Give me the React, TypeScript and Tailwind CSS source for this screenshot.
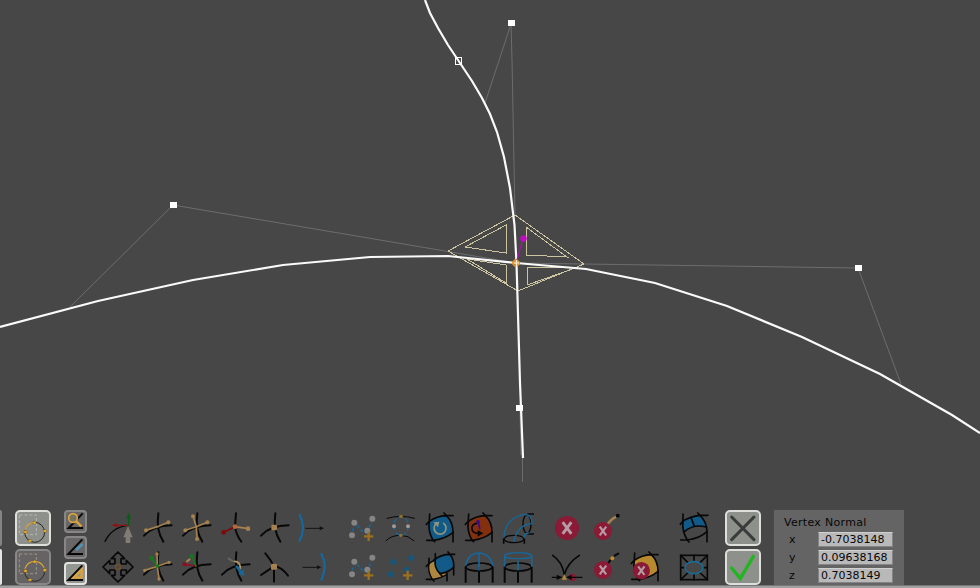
import React from "react";

const TAN = "#a4814e";
const BLUE = "#17679a";
const RED = "#8a1a36";
const GREEN = "#137a1c";

type Pt = [number, number];

function Cell({ children }: { children?: React.ReactNode }) {
  return (
    <svg className="block h-[39px] w-[39px] shrink-0" viewBox="0 0 117 117" fill="none" stroke="#080808" strokeWidth={6} strokeLinecap="round">
      {children}
    </svg>
  );
}

function Cross() {
  return (
    <>
      <path d="M64 16Q57 68 79 101" />
      <path d="M21 83Q47 53 104 52" />
    </>
  );
}

function Handle({ from, to, color = TAN, r = 6 }: { from: Pt; to: Pt; color?: string; r?: number }) {
  return (
    <>
      <path d={`M${from[0]} ${from[1]}L${to[0]} ${to[1]}`} stroke={color} strokeWidth={5} />
      <circle cx={to[0]} cy={to[1]} r={r} fill={color} stroke="none" />
    </>
  );
}

function Plus() {
  return <path d="M80 71V99M66 85H94" stroke="#9b701e" strokeWidth={7} strokeLinecap="butt" />;
}

function Nodes() {
  const points: Pt[] = [[30, 82], [37, 44], [76, 68], [91, 32]];
  return (
    <Cell>
      <path d="M31 70L35 55M46 53L65 74M82 58L88 43" stroke={BLUE} strokeWidth={5} strokeDasharray="9 6" strokeLinecap="butt" />
      {points.map(([x, y]) => (
        <circle key={x} cx={x} cy={y} r={9} fill="#858585" stroke="none" />
      ))}
      <Plus />
    </Cell>
  );
}

function Patch({ fill }: { fill: string }) {
  return (
    <>
      <path d="M28 40Q50 24 79 23Q99 42 99 73Q76 93 39 97Q23 68 28 40Z" fill={fill} strokeWidth={5} strokeLinejoin="round" />
      <path d="M19 49L28 40M28 40L29 18M79 23H99M79 23L72 15M99 73V101M39 97H20M39 97L44 101" strokeWidth={5} />
    </>
  );
}

function Cancel({ x, y, r }: { x: number; y: number; r: number }) {
  const s = r * 0.29;
  return (
    <>
      <circle cx={x} cy={y} r={r} fill={RED} stroke="none" />
      <path
        d={`M${x - s} ${y - s * 1.35}L${x + s} ${y + s * 1.35}M${x + s} ${y - s * 1.35}L${x - s} ${y + s * 1.35}`}
        stroke="#b79ca4"
        strokeWidth={r * 0.24}
        strokeLinecap="square"
      />
    </>
  );
}

function Row({ groups }: { groups: React.ReactNode[][] }) {
  return (
    <div className="flex gap-[10px]">
      {groups.map((g, i) => (
        <div key={i} className="flex">
          {g.map((n, j) => (
            <React.Fragment key={j}>{n}</React.Fragment>
          ))}
        </div>
      ))}
    </div>
  );
}

const topRow: React.ReactNode[][] = [
  [
    <Cell>
      <path d="M21 100Q42 57 91 52" strokeWidth={4} />
      <path d="M91 52H48" stroke="#8d1212" strokeWidth={4} />
      <path d="M40 52L58 46V58Z" fill="#8d1212" stroke="none" />
      <path d="M92 51V25" stroke="#0b5c14" strokeWidth={4} />
      <path d="M92 14L99 33H85Z" fill="#0b5c14" stroke="none" />
      <path d="M90 54L104 88H97V105H83V88H76Z" fill="#807c74" stroke="none" />
    </Cell>,
    <Cell>
      <Cross />
      <Handle from={[61, 56]} to={[27, 67]} />
      <Handle from={[61, 56]} to={[94, 43]} />
    </Cell>,
    <Cell>
      <Cross />
      <Handle from={[61, 56]} to={[28, 67]} />
      <Handle from={[61, 56]} to={[94, 43]} />
      <Handle from={[61, 56]} to={[51, 25]} />
      <Handle from={[61, 56]} to={[63, 93]} />
    </Cell>,
    <Cell>
      <path d="M63 16L60 56Q64 82 79 101" />
      <Handle from={[60, 56]} to={[26, 73]} color="#7e0808" r={7} />
      <Handle from={[60, 56]} to={[99, 62]} r={7} />
      <circle cx={60} cy={56} r={7} fill="#b4693c" stroke="none" />
    </Cell>,
    <Cell>
      <Cross />
      <rect x={52} y={50} width={17} height={17} rx={4} fill={TAN} stroke="none" />
    </Cell>,
    <Cell>
      <path d="M20 21Q40 59 20 98" stroke={BLUE} strokeWidth={7} />
      <path d="M38 61H88" strokeWidth={2.5} />
      <path d="M93 61L80 55V67Z" fill="#111" stroke="none" />
    </Cell>,
  ],
  [
    <Nodes />,
    <Cell>
      <path d="M18 31Q59 19 101 31M15 98Q30 82 59 82Q82 82 99 98" strokeWidth={3} />
      <ellipse cx={60} cy={54} rx={22} ry={28} stroke={BLUE} strokeWidth={4} strokeDasharray="14 8" strokeLinecap="butt" />
      <circle cx={60} cy={25} r={5} fill="#9b701e" stroke="none" />
      <circle cx={59} cy={82} r={5} fill="#9b701e" stroke="none" />
      <circle cx={39} cy={55} r={6} fill="#9b9b9b" stroke="none" />
      <circle cx={81} cy={55} r={6} fill="#9b9b9b" stroke="none" />
    </Cell>,
    <Cell>
      <Patch fill="#125a87" />
      <path d="M71 46A18 18 0 1 1 51 45" stroke="#8f967f" strokeWidth={5} />
      <path d="M40 43L58 41L54 58Z" fill="#8f967f" stroke="none" />
    </Cell>,
    <Cell>
      <Patch fill="#83300f" />
      <path d="M53 46C32 48 34 77 58 76" strokeWidth={5} />
      <path d="M73 76L56 66V86Z" fill="#080808" stroke="none" />
      <path d="M58 41L62 62" stroke="#350a90" strokeWidth={5} />
      <circle cx={57} cy={41} r={5} fill="#350a90" stroke="none" />
    </Cell>,
    <Cell>
      <ellipse cx={48} cy={93} rx={30} ry={11} strokeWidth={4} />
      <ellipse cx={87} cy={48} rx={12} ry={28} strokeWidth={4} />
      <path d="M17 92V107M79 92V107M88 18H108M88 78H108" strokeWidth={5} strokeLinecap="butt" />
      <path d="M18 87C20 45 47 23 82 19C96 20 102 30 102 47C75 49 55 66 48 100M78 88C78 81 84 76 91 75" stroke={BLUE} strokeWidth={4} />
    </Cell>,
  ],
  [
    <Cell>
      <Cancel x={60} y={60} r={36} />
    </Cell>,
    <Cell>
      <path d="M65 48Q76 32 92 25" stroke={TAN} strokeWidth={7} />
      <circle cx={95} cy={23} r={6} fill="#080808" stroke="none" />
      <Cancel x={51} y={69} r={27} />
    </Cell>,
    <Cell />,
  ],
  [
    <Cell>
      <path d="M27 39Q49 26 78 22Q94 38 96 57Q64 48 31 71Q25 54 27 39Z" fill="#125a87" stroke="none" />
      <path d="M27 39Q49 26 78 22Q99 42 99 71Q76 92 40 96Q23 68 27 39Z" strokeWidth={5} strokeLinejoin="round" />
      <path d="M31 71Q60 47 96 57M52 31L61 55M19 49L27 39V18M78 22H102M78 22L71 15M99 71V101M40 96H20M40 96L45 102" strokeWidth={5} />
    </Cell>,
  ],
];

const bottomRow: React.ReactNode[][] = [
  [
    <Cell>
      <path
        d="M60 15L80 35H69V49L72 51H85V40L105 60L85 80V69H72L69 71V85H80L60 105L40 85H51V71L48 69H35V80L15 60L35 40V51H48L51 49V35H40Z"
        strokeWidth={5}
        strokeLinejoin="round"
      />
      <circle cx={60} cy={60} r={7} stroke="#765024" strokeWidth={4} />
    </Cell>,
    <Cell>
      <Cross />
      <Handle from={[61, 58]} to={[44, 34]} color={GREEN} r={7} />
      <Handle from={[61, 58]} to={[96, 46]} r={5} />
      <Handle from={[61, 58]} to={[23, 70]} r={5} />
      <Handle from={[61, 58]} to={[60, 21]} r={5} />
      <Handle from={[61, 58]} to={[66, 96]} r={5} />
      <circle cx={61} cy={57} r={5} fill={GREEN} stroke="none" />
    </Cell>,
    <Cell>
      <Cross />
      <path d="M33 43L41 37" stroke={TAN} />
      <Handle from={[60, 57]} to={[25, 52]} color="#8b1022" />
      <Handle from={[60, 57]} to={[47, 27]} color={GREEN} />
    </Cell>,
    <Cell>
      <Cross />
      <path d="M41 35L52 42" stroke="#66665f" />
      <path d="M58 43Q76 43 76 64" stroke="#b49869" strokeWidth={5} />
      <path d="M65 59L82 80" stroke={BLUE} strokeWidth={8} />
      <path d="M85 68L88 87L70 81Z" fill={BLUE} stroke="none" />
    </Cell>,
    <Cell>
      <path d="M34 19Q48 35 60 58V104M21 84L60 58Q83 60 102 86" />
      <rect x={51} y={50} width={18} height={18} rx={4} fill={TAN} stroke="none" />
    </Cell>,
    <Cell>
      <path d="M85 21Q105 59 85 98" stroke={BLUE} strokeWidth={7} />
      <path d="M30 61H80" strokeWidth={2.5} />
      <path d="M85 61L72 55V67Z" fill="#111" stroke="none" />
    </Cell>,
  ],
  [
    <Nodes />,
    <Cell>
      <g fill="#17577b" stroke="none">
        <circle cx={37} cy={45} r={9} />
        <circle cx={91} cy={33} r={9} />
        <circle cx={30} cy={82} r={9} />
        <circle cx={77} cy={67} r={8} />
      </g>
      <Plus />
    </Cell>,
    <Cell>
      <path d="M27 50Q38 40 58 38L81 82Q62 94 37 97Q22 73 27 50Z" fill="#ad8740" strokeWidth={4} strokeLinejoin="round" />
      <path d="M46 36Q65 22 90 22Q103 40 101 61Q84 77 60 80Q41 61 46 36Z" fill="#125a87" strokeWidth={5} strokeLinejoin="round" />
      <path d="M19 58L27 50V34M46 36L40 40M46 36V20M90 22H104M90 22L84 15M101 61V84M81 81V101M60 80L66 87M37 97H19M37 97L42 102" strokeWidth={5} />
    </Cell>,
    <Cell>
      <ellipse cx={60} cy={60} rx={40} ry={12} strokeWidth={5} />
      <path d="M20 60V107M60 60V107M101 60V107" strokeWidth={6} strokeLinecap="butt" />
      <path d="M20 54Q28 19 60 18Q92 19 101 54M60 18V69" stroke={BLUE} strokeWidth={5} />
    </Cell>,
    <Cell>
      <ellipse cx={60} cy={60} rx={40} ry={12} strokeWidth={5} />
      <path d="M20 60V107M60 70V107M101 60V107" strokeWidth={6} strokeLinecap="butt" />
      <ellipse cx={60} cy={26} rx={41} ry={9} stroke={BLUE} strokeWidth={4} />
      <path d="M20 26V57M60 43V68M101 26V57" stroke={BLUE} strokeWidth={5} />
    </Cell>,
  ],
  [
    <Cell>
      <path d="M17 25Q45 43 52 83Q61 48 97 25" strokeWidth={5} />
      <circle cx={76} cy={91} r={11} fill={RED} stroke="none" />
      <path d="M16 91H38M105 91H66" strokeWidth={4} />
      <path d="M47 91L29 83V99ZM57 91L74 83V99Z" fill="#080808" stroke="none" />
      <path d="M52 82L60 98H44Z" fill="#b28836" stroke="none" />
    </Cell>,
    <Cell>
      <path d="M66 50L72 41M86 26L97 20" strokeWidth={6} />
      <circle cx={79} cy={34} r={6} fill="#c18b2c" stroke="none" />
      <Cancel x={51} y={69} r={27} />
    </Cell>,
    <Cell>
      <Patch fill="#b88a2e" />
      <Cancel x={49} y={71} r={26} />
    </Cell>,
  ],
  [
    <Cell>
      <rect x={20} y={25} width={80} height={73} strokeWidth={5} strokeLinejoin="miter" />
      <path d="M20 25L41 46M100 25L79 46M20 98L41 78M100 98L79 78M60 25V41M60 82V98M20 62H32M88 62H100" strokeWidth={5} />
      <ellipse cx={60} cy={62} rx={27} ry={18} stroke="#1a6b93" strokeWidth={5} />
    </Cell>,
  ],
];

function Tool({ active, children }: { active?: boolean; children: React.ReactNode }) {
  return (
    <div
      className={
        active
          ? "h-9 w-9 shrink-0 overflow-hidden rounded-[5px] border-2 border-[#dededb] bg-[#8d908b]"
          : "h-9 w-9 shrink-0 overflow-hidden rounded-[5px] border-2 border-[#898788] bg-[#656364]"
      }
    >
      <svg className="block h-8 w-8" viewBox="0 0 96 96" fill="none" strokeLinecap="round">
        {children}
      </svg>
    </div>
  );
}

function SelectCircle({ dark }: { dark?: boolean }) {
  return (
    <g>
      <path d="M7 9H58V68H7Z" stroke={dark ? "#aaa28d" : "#bec1b0"} strokeWidth={2.5} strokeDasharray="9 6" strokeLinecap="butt" />
      <circle cx={53} cy={61} r={30} stroke="#262725" strokeWidth={3} />
      <path d={dark ? "M23 61A30 30 0 0 1 83 61" : "M23 61A30 30 0 0 1 53 31"} stroke="#d7a641" strokeWidth={3.5} />
      <g fill="#edb632" stroke="#58400f" strokeWidth={1}>
        <rect x={48} y={28} width={9} height={8} rx={2} />
        <rect x={21} y={56} width={9} height={8} rx={2} />
        <rect x={79} y={53} width={9} height={8} rx={2} />
        <rect x={34} y={83} width={10} height={7} rx={2} />
      </g>
    </g>
  );
}

function SmallTool({ active, children }: { active?: boolean; children: React.ReactNode }) {
  return (
    <div
      className={
        active
          ? "h-[23px] w-[23px] rounded-[4px] border-2 border-[#e2e2e0] bg-[#949692]"
          : "h-[23px] w-[23px] rounded-[4px] border-2 border-[#888687] bg-[#686667]"
      }
    >
      <svg className="block h-[19px] w-[19px]" viewBox="0 0 57 57" fill="none" stroke="#080808" strokeWidth={5}>
        {children}
      </svg>
    </div>
  );
}

function Marker({ x, y }: { x: number; y: number }) {
  return <rect x={x - 3} y={y - 3} width={7} height={6} fill="#fff" shapeRendering="crispEdges" />;
}

function Viewport() {
  return (
    <svg className="block h-[510px] w-[980px] shrink-0" viewBox="0 0 980 510" fill="none">
      <g stroke="#73777a" strokeWidth={0.8}>
        <path d="M70 307L173 205L516 263L858 268L901 384" />
        <path d="M485 103L511 24L512 60L515 215M520 410L521 455M522.5 458V482" />
      </g>
      <g stroke="#ccc3a1" strokeWidth={1} shapeRendering="crispEdges">
        <path d="M448 251L515 215L584 264L518 291Z" />
        <path d="M506 225L465 247L506 253Z" />
        <path d="M526 227V255L567 257Z" />
        <path d="M467 259L506 265V283Z" />
        <path d="M527 268V285L578 267Z" />
      </g>
      <path
        d="M0 327L98 301L193 280L283 265L370 257L448 256L516 263L586 269L655 283L727 306L802 337L880 374L952 415L980 433"
        stroke="#fafafa"
        strokeWidth={2.2}
      />
      <path
        d="M425 0L430 13L438 28L448 45L458 60L472 81L482 98L490 114L497 132L504 157L510 188L514.5 225L516.5 263L520 383L523 458"
        stroke="#fafafa"
        strokeWidth={2.2}
      />
      <rect x={455.5} y={57.5} width={6} height={7} stroke="#fff" />
      <Marker x={511} y={23} />
      <Marker x={173} y={205} />
      <Marker x={858} y={268} />
      <Marker x={519} y={408} />
      <path d="M516 259V267M512 263H520" stroke="#e59a36" strokeWidth={3} />
      <circle cx={516} cy={263} r={3.2} stroke="#e59a36" strokeWidth={1} />
      <path d="M514 263H519M516.5 260V267" stroke="#fff1d4" />
      <path d="M517 260L523 239" stroke="#aa15ae" strokeWidth={1.2} />
      <circle cx={523.5} cy={238.5} r={3.2} fill="#c20ac5" />
    </svg>
  );
}

const fields = [
  { axis: "x", value: "-0.7038148" },
  { axis: "y", value: "0.09638168" },
  { axis: "z", value: "0.7038149" },
];

export default function App() {
  return (
    <div className="flex h-[588px] w-[980px] flex-col overflow-hidden bg-[#474747]">
      <Viewport />
      <div className="flex h-[75px] shrink-0 items-start overflow-hidden">
        <div className="flex w-[2px] shrink-0 flex-col gap-[3px]">
          <div className="h-9 rounded-r-[2px] bg-[#858384]" />
          <div className="h-9 rounded-r-[2px] bg-[#e5e5e3]" />
        </div>
        <div className="ml-[13px] flex flex-col gap-[3px]">
          <Tool active><SelectCircle /></Tool>
          <Tool><SelectCircle dark /></Tool>
        </div>
        <div className="ml-[13px] flex flex-col gap-[3px]">
          <SmallTool>
            <path d="M50 4L8 48H51" strokeWidth={6} />
            <circle cx={21} cy={18} r={13} fill="#777363" stroke="#dba33d" />
            <path d="M31 28L46 43" stroke="#dba33d" strokeWidth={7} />
          </SmallTool>
          <SmallTool>
            <path d="M49 4L7 48H51" strokeWidth={6} />
            <path d="M30 36L50 18" stroke="#5194b8" strokeWidth={8} />
          </SmallTool>
          <SmallTool active>
            <path d="M49 4L7 48H51" strokeWidth={6} />
            <path d="M47 17V41H23Z" stroke="#dba33d" strokeWidth={7} fill="#949692" />
          </SmallTool>
        </div>
        <div className="-mt-[2px] ml-[11px] flex w-[627px] shrink-0 flex-col">
          <Row groups={topRow} />
          <Row groups={bottomRow} />
        </div>
        <div className="flex shrink-0 flex-col gap-[3px]">
          <Tool active>
            <path d="M14 15L81 83M81 15L14 83" stroke="#3a3c3b" strokeWidth={9} />
          </Tool>
          <Tool active>
            <path d="M14 51L40 83L79 16" stroke="#20b620" strokeWidth={10} />
          </Tool>
        </div>
        <div className="ml-[13px] flex h-[75px] w-[130px] shrink-0 flex-col bg-[#646464] text-[11px] text-[#080808] [font-family:'DejaVu_Sans',sans-serif]">
          <div className="h-[22px] pt-[5px] pl-[10px] leading-[16px] tracking-[0.3px]">Vertex Normal</div>
          <div className="flex flex-col gap-[3px]">
            {fields.map((f) => (
              <div key={f.axis} className="flex h-[15px] items-center">
                <span className="w-[44px] pl-[15px] leading-[15px]">{f.axis}</span>
                <span className="h-[15px] w-[75px] border border-[#848484] border-t-[#d0d0d0] bg-[#b9b9b9] pl-[2px] leading-[13px]">
                  {f.value}
                </span>
              </div>
            ))}
          </div>
        </div>
      </div>
      <div className="h-[3px] shrink-0 border-t border-[#777] bg-[#a0a0a0]" />
    </div>
  );
}
